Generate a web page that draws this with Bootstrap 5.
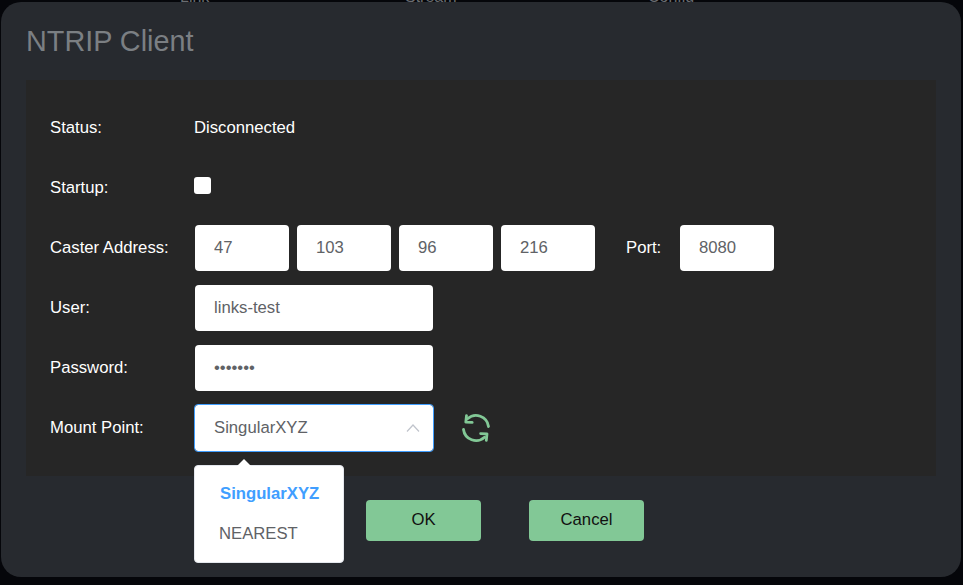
<!DOCTYPE html>
<html lang="en">
<head>
<meta charset="utf-8">
<title>NTRIP Client</title>
<link rel="stylesheet" href="https://cdn.jsdelivr.net/npm/bootstrap@5.3.0/dist/css/bootstrap.min.css">
<style>
html,body{height:100%;}
body{background:#05060a;font-family:"Liberation Sans",Arial,sans-serif;font-size:16.7px;color:#fff;overflow:hidden;}
.behind{height:2px;overflow:hidden;padding-left:180px;align-items:flex-end;color:#6a6d71;font-size:16px;line-height:16px;}
.behind span{margin-bottom:-3px;}
.behind span:nth-child(1){width:225px;}
.behind span:nth-child(2){width:243px;}
.shell{height:575px;margin:0 2px 0 1px;background:#272a2f;border-radius:20px;padding:0 25px;}
.shell-title{height:78px;margin:0;padding-top:20px;font-size:28.8px;line-height:38px;font-weight:400;color:#7b7f83;}
.pane{height:396px;background:#262626;padding:18px 24px 18px;}
.line{height:60px;}
.tag{width:144px;flex:none;}
.box.form-control{height:46px;width:94px;padding:0 19px;font-size:16.7px;color:#606266;border:0;border-radius:4px;box-shadow:none;margin-top:-1px;font-family:inherit;}
.box.wide{width:238px;}
.gapper{gap:8px;margin-left:1px;}
.port-tag{width:54px;flex:none;margin-left:31px;}
.tick.form-check-input{width:17px;height:17px;margin:0 0 5px 0;border:0;border-radius:3px;background-color:#fff;}
.sel-wrap{width:240px;margin-top:-1px;}
.box.picked{width:240px;height:48px;border:1px solid #409eff;margin:0;padding:0 19px;}
.caret-up{position:absolute;right:14px;top:20px;}
.spin{margin-left:27px;margin-top:-1px;}
.pop.dropdown-menu{position:absolute;left:0;top:61px;width:150px;min-width:0;height:98px;padding:0;border:1px solid #e4e7ed;border-radius:4px;background:#fff;z-index:5;}
.pop::before{content:"";position:absolute;left:42px;top:-7px;border:7px solid transparent;border-top:0;border-bottom-color:#fff;}
.pop .dropdown-item{height:40px;line-height:40px;padding:0 0 0 24px;font-size:16.7px;color:#606266;background:none;}
.pop .dropdown-item.on{color:#409eff;font-weight:700;padding-left:25px;margin-top:8px;}
.foot{padding-top:24px;padding-left:340px;gap:48px;}
.go.btn{width:115px;height:41px;padding:0 0 2px;font-size:16.7px;line-height:36px;color:#111;background:#82c896;border:0;border-radius:4px;}
</style>
</head>
<body>
<div class="behind d-flex"><span>Link</span><span>Stream</span><span>Config</span></div>
<div class="shell">
  <h5 class="shell-title">NTRIP Client</h5>
  <div class="pane">
    <div class="line d-flex align-items-center"><div class="tag">Status:</div><div>Disconnected</div></div>
    <div class="line d-flex align-items-center"><div class="tag">Startup:</div><input class="form-check-input tick" type="checkbox" aria-label="Startup"></div>
    <div class="line d-flex align-items-center">
      <div class="tag">Caster Address:</div>
      <div class="d-flex gapper">
        <input class="form-control box" value="47"><input class="form-control box" value="103"><input class="form-control box" value="96"><input class="form-control box" value="216">
      </div>
      <div class="port-tag">Port:</div>
      <input class="form-control box" value="8080">
    </div>
    <div class="line d-flex align-items-center"><div class="tag">User:</div><div class="gapper d-flex"><input class="form-control box wide" value="links-test"></div></div>
    <div class="line d-flex align-items-center"><div class="tag">Password:</div><div class="gapper d-flex"><input class="form-control box wide" type="password" value="1234567"></div></div>
    <div class="line d-flex align-items-center">
      <div class="tag">Mount Point:</div>
      <div class="position-relative sel-wrap">
        <input class="form-control box picked" value="SingularXYZ">
        <svg class="caret-up" width="14" height="8" viewBox="0 0 14 8" fill="none" stroke="#c0c4cc" stroke-width="1.2"><path d="M1 7.5 7 1l6 6.500"/></svg>
        <div class="dropdown-menu show pop">
          <a class="dropdown-item on" href="#">SingularXYZ</a>
          <a class="dropdown-item" href="#">NEAREST</a>
        </div>
      </div>
      <svg class="spin" width="30" height="30" viewBox="0 0 30 30" fill="none" stroke="#82c896" stroke-width="2.800" stroke-linecap="round" stroke-linejoin="round">
        <path d="M27.500 13.500A12.600 12.600 0 0 0 6.500 5.800"/>
        <path d="M2.500 16.500A12.600 12.600 0 0 0 23.500 24.200"/>
        <path d="M5.500 2.600 4.800 9.200l6.400.2"/>
        <path d="M25.300 27.400 26 20.800l-6.400-.2"/>
      </svg>
    </div>
  </div>
  <div class="foot d-flex">
    <button class="btn go" type="button">OK</button>
    <button class="btn go" type="button">Cancel</button>
  </div>
</div>
<script src="https://cdn.jsdelivr.net/npm/bootstrap@5.3.0/dist/js/bootstrap.bundle.min.js"></script>
</body>
</html>
